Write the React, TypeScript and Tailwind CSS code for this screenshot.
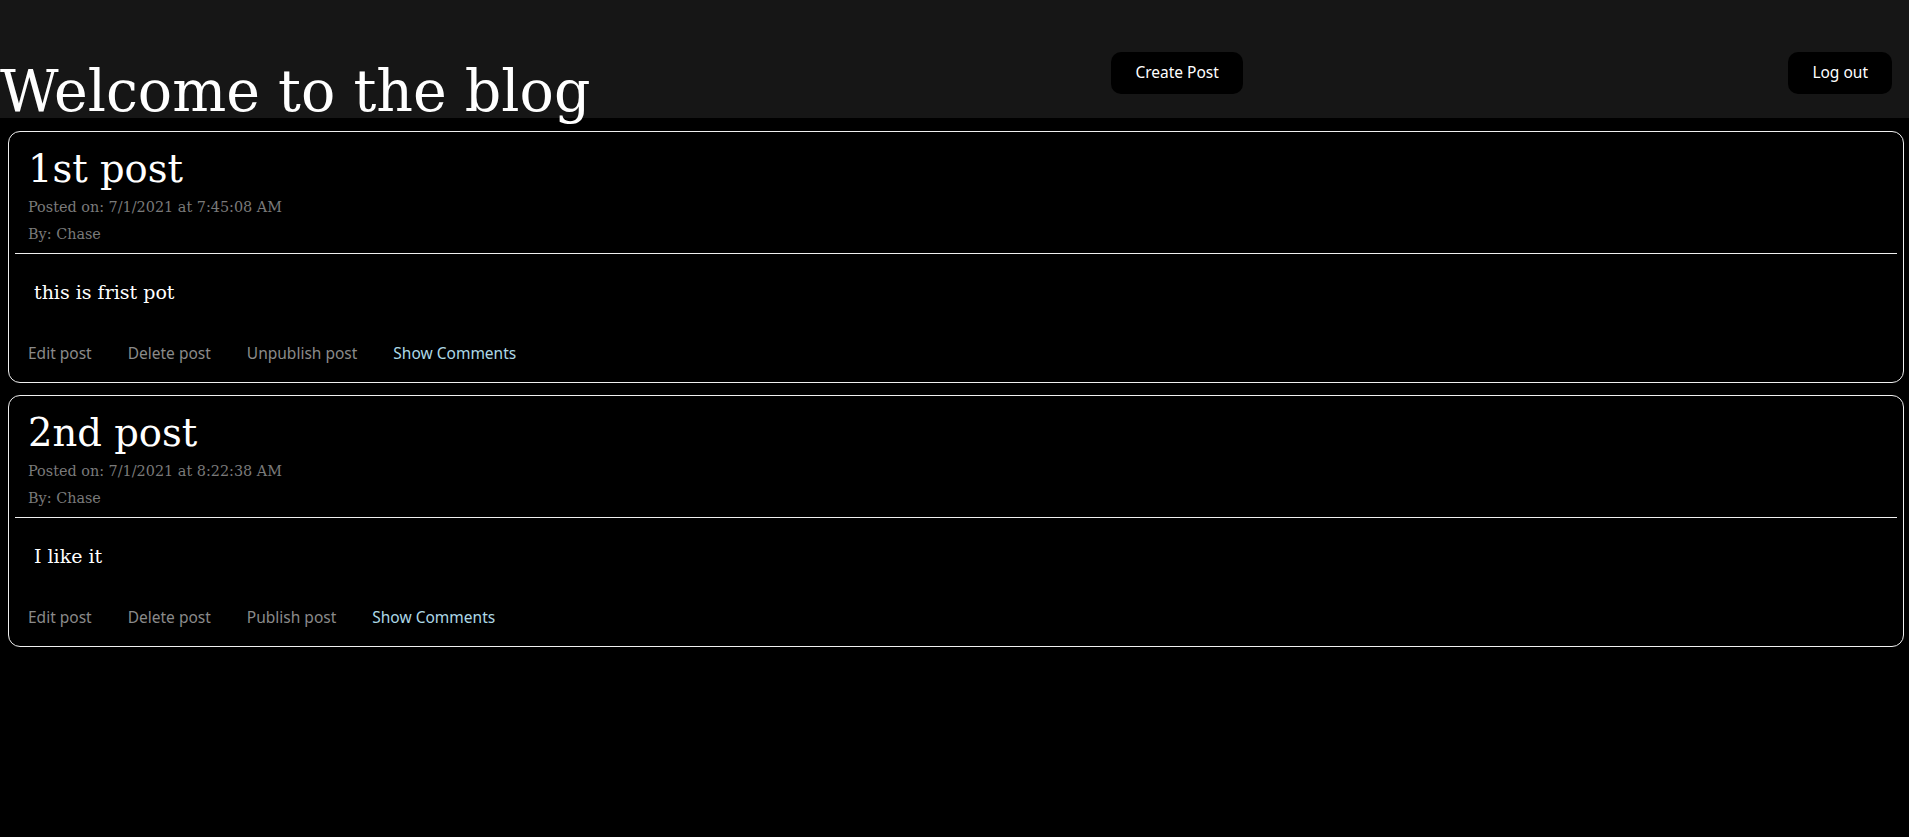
import React from "react";

const serif = { fontFamily: '"DejaVu Serif", serif' };

type Post = { title: string; date: string; body: string; publish: string };

const posts: Post[] = [
  { title: "1st post", date: "7/1/2021 at 7:45:08 AM", body: "this is frist pot", publish: "Unpublish post" },
  { title: "2nd post", date: "7/1/2021 at 8:22:38 AM", body: "I like it", publish: "Publish post" },
];

function Card({ p }: { p: Post }) {
  return (
    <div className="ml-[8px] mr-[5px] h-[252px] rounded-[12px] border border-[#f0f0f0] px-[6px] pt-[15px] flex flex-col">
      <div className="px-[13px] font-['DejaVu_Serif',serif]">
        <h2 className="text-[38.5px] leading-[44px] text-white">{p.title}</h2>
        <p className="mt-[3px] text-[14.4px] leading-[27px] text-[#7a7a7a]">Posted on: {p.date}</p>
        <p className="text-[14.4px] leading-[27px] text-[#7a7a7a]">By: Chase</p>
      </div>
      <div className="mt-[5px] h-px bg-[#f0f0f0]" />
      <p className="mt-[24px] px-[19px] text-[19px] leading-[28px] text-white font-['DejaVu_Serif',serif]">{p.body}</p>
      <div className="mt-[37px] flex gap-[36px] px-[13px] text-[15.5px] leading-[20px] font-['Noto_Sans',sans-serif]">
        <span className="text-[#8a8a8a]">Edit post</span>
        <span className="text-[#8a8a8a]">Delete post</span>
        <span className="text-[#8a8a8a]">{p.publish}</span>
        <span className="text-[#add8e6]">Show Comments</span>
      </div>
    </div>
  );
}

export default function App() {
  return (
    <div className="min-h-[837px] bg-black">
      <header className="h-[118px] bg-[#161616] flex items-start">
        <h1 className="mt-[56px] text-[57px] leading-[70px] text-white whitespace-nowrap" style={serif}>
          Welcome to the blog
        </h1>
        <button className="ml-[521px] mt-[52px] h-[42px] px-[24px] rounded-[10px] bg-black text-white text-[15.5px] font-['Noto_Sans',sans-serif]">
          Create Post
        </button>
        <button className="ml-auto mr-[17px] mt-[52px] h-[42px] px-[24px] rounded-[10px] bg-black text-white text-[15.5px] font-['Noto_Sans',sans-serif]">
          Log out
        </button>
      </header>
      <main className="pt-[13px] flex flex-col gap-[12px]">
        {posts.map((p) => (
          <Card key={p.title} p={p} />
        ))}
      </main>
    </div>
  );
}
